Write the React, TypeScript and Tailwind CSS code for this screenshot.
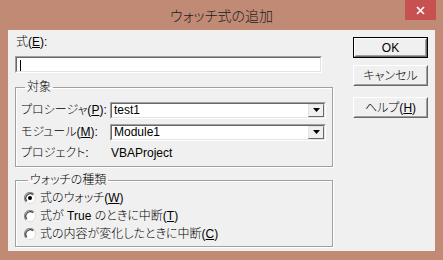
import React from "react";

const font = "[font-family:'Liberation_Sans','Noto_Sans_CJK_JP',sans-serif] [font-feature-settings:'palt']";

// Classic sunken 3D edge (text box / combo box)
function Sunken({ className, children }: { className?: string; children?: React.ReactNode }) {
    return (
        <div className={`border border-t-[#a0a0a0] border-l-[#a0a0a0] border-r-white border-b-white ${className ?? ""}`}>
            <div className="h-full w-full border border-t-[#696969] border-l-[#696969] border-r-[#e3e3e3] border-b-[#e3e3e3] bg-white">
                {children}
            </div>
        </div>
    );
}

function Combo({ value }: { value: string }) {
    return (
        <Sunken className="h-[17px] w-[216px]">
            <div className="flex h-full items-center">
                <span className="flex-1 pl-[2px] text-[12px] leading-none text-black">{value}</span>
                <div className="flex h-full w-[16px] items-center justify-center border border-t-[#e3e3e3] border-l-[#e3e3e3] border-r-[#696969] border-b-[#696969] bg-[#f0f0f0]">
                    <svg width="7" height="4" viewBox="0 0 7 4">
                        <path d="M0 0h7L3.5 4z" fill="#000" />
                    </svg>
                </div>
            </div>
        </Sunken>
    );
}

function Button({ label, isDefault }: { label: React.ReactNode; isDefault?: boolean }) {
    return (
        <div className={`h-[21px] w-[75px] ${isDefault ? "border border-black" : ""}`}>
            <div className="h-full w-full border border-t-white border-l-white border-r-[#696969] border-b-[#696969] bg-[#f0f0f0]">
                <div className="flex h-full w-full items-center justify-center border border-t-[#f0f0f0] border-l-[#f0f0f0] border-r-[#a0a0a0] border-b-[#a0a0a0] text-[12px] text-black">
                    {label}
                </div>
            </div>
        </div>
    );
}

// Classic sunken radio button
function Radio({ checked }: { checked?: boolean }) {
    return (
        <svg width="12" height="12" viewBox="0 0 12 12">
            <circle cx="6" cy="6" r="5.5" fill="#fff" />
            <path d="M2.1 9.9 A5.5 5.5 0 0 1 9.9 2.1" fill="none" stroke="#8a8a8a" strokeWidth="1.2" />
            <path d="M2.9 9.1 A4.4 4.4 0 0 1 9.1 2.9" fill="none" stroke="#404040" strokeWidth="1.2" />
            <path d="M9.9 2.1 A5.5 5.5 0 0 1 2.1 9.9" fill="none" stroke="#dcdcdc" strokeWidth="1" />
            {checked && <circle cx="6" cy="6" r="2" fill="#000" />}
        </svg>
    );
}

const U = ({ c }: { c: string }) => <span className="underline underline-offset-1">{c}</span>;

export default function App() {
    return (
        <div className={`relative flex h-[260px] w-[443px] flex-col bg-[#c08a75] ${font}`}>
            {/* ── Title bar ───────────────────────────────────────── */}
            <div className="flex h-[30px] items-center justify-center pt-[3px] text-[14px] font-light text-[#202020]">
                ウォッチ式の追加
            </div>
            <div className="absolute right-[7px] top-0 flex h-[20px] w-[31px] items-center justify-center bg-[#c75050]">
                <svg width="9" height="9" viewBox="0 0 9 9">
                    <path d="M1 1l7 7M8 1l-7 7" stroke="#fff" strokeWidth="1.6" />
                </svg>
            </div>

            {/* ── Client area ─────────────────────────────────────── */}
            <div className="mx-[8px] flex h-[221px] bg-[#f0f0f0] text-[12px] font-light text-black">
                <div className="flex w-[338px] flex-col pl-[7px]">
                    <div className="mt-[4px] h-[16px] pl-[1px] leading-[16px]">
                        式(<U c="E" />):
                    </div>
                    <Sunken className="mt-[6px] h-[17px] w-[307px]">
                        <div className="ml-[3px] mt-[2px] h-[11px] w-px bg-black" />
                    </Sunken>

                    {/* 対象 */}
                    <fieldset className="mt-[6px] w-[318px] border border-[#a0a0a0] px-[5px] pb-[5px] pt-[6px] shadow-[inset_1px_1px_0_#fff,1px_1px_0_#fff]">
                        <legend className="ml-[4px] px-[2px] leading-[16px]">対象</legend>
                        <div className="flex flex-col gap-[4px]">
                            <div className="flex items-center">
                                <span className="w-[89px]">
                                    プロシージャ(<U c="P" />):
                                </span>
                                <Combo value="test1" />
                            </div>
                            <div className="flex items-center">
                                <span className="w-[89px]">
                                    モジュール(<U c="M" />):
                                </span>
                                <Combo value="Module1" />
                            </div>
                            <div className="flex h-[16px] items-center">
                                <span className="w-[89px]">プロジェクト:</span>
                                <span className="pl-[1px]">VBAProject</span>
                            </div>
                        </div>
                    </fieldset>

                    {/* ウォッチの種類 */}
                    <fieldset className="mt-[5px] w-[318px] border border-[#a0a0a0] px-[8px] pb-[3px] pt-[1px] shadow-[inset_1px_1px_0_#fff,1px_1px_0_#fff]">
                        <legend className="ml-[4px] px-[2px] leading-[16px]">ウォッチの種類</legend>
                        <div className="flex flex-col">
                            <div className="flex h-[18px] items-center gap-[4px]">
                                <Radio checked />
                                <span>
                                    式のウォッチ(<U c="W" />)
                                </span>
                            </div>
                            <div className="flex h-[18px] items-center gap-[4px]">
                                <Radio />
                                <span>
                                    式が True のときに中断(<U c="T" />)
                                </span>
                            </div>
                            <div className="flex h-[18px] items-center gap-[4px]">
                                <Radio />
                                <span>
                                    式の内容が変化したときに中断(<U c="C" />)
                                </span>
                            </div>
                        </div>
                    </fieldset>
                </div>

                {/* Buttons */}
                <div className="flex flex-col pl-[7px] pt-[7px]">
                    <Button label="OK" isDefault />
                    <div className="mt-[7px]">
                        <Button label="キャンセル" />
                    </div>
                    <div className="mt-[11px]">
                        <Button label={<span>ヘルプ(<U c="H" />)</span>} />
                    </div>
                </div>
            </div>
        </div>
    );
}
